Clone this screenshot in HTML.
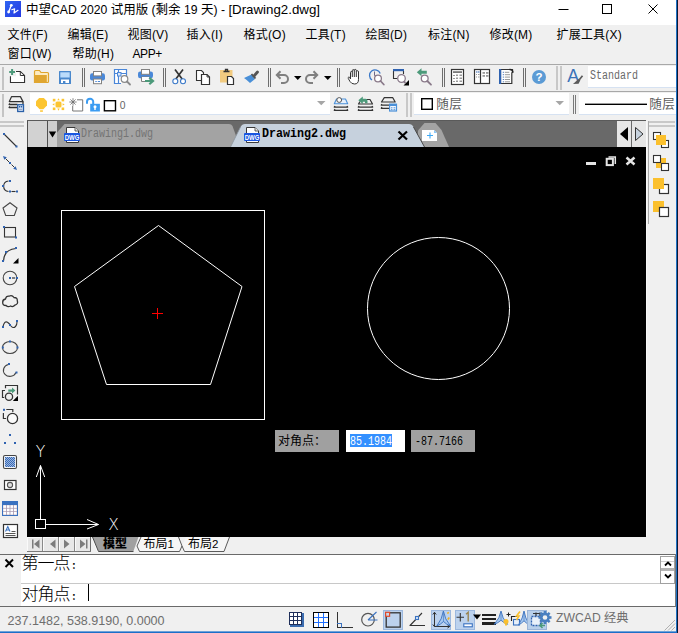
<!DOCTYPE html>
<html lang="zh-CN">
<head>
<meta charset="utf-8">
<title>中望CAD 2020</title>
<style>
html,body{margin:0;padding:0;}
body{width:678px;height:633px;position:relative;overflow:hidden;background:#f0f0f0;
 font-family:"Liberation Sans","Noto Sans CJK SC",sans-serif;font-size:12px;color:#000;}
.abs{position:absolute;}
#title{left:0;top:0;width:678px;height:25px;background:#fff;}
#title .t{left:26px;top:1px;font-size:12.5px;line-height:17px;white-space:nowrap;}
#title .t i{font-style:normal;font-size:12.2px;}
#title .t b{font-weight:normal;font-size:13.3px;}
#menu{left:0;top:25px;padding-left:0;width:678px;height:40px;background:#f0f0f0;}
#menu span{position:absolute;margin-left:-0.5px;letter-spacing:.2px;white-space:nowrap;font-size:12px;line-height:16px;}
.r1{top:2px;}
.r2{top:21px;}
#tb1{left:0;top:65px;width:678px;height:27px;background:#f0f0f0;}
#tb2{left:0;top:92px;width:678px;height:27px;background:#f0f0f0;}
.vsep{position:absolute;width:1px;background:#8c8c8c;}
.white{position:absolute;background:#fff;}
#tabbar{left:27px;top:120px;width:619px;height:27px;background:#696969;}
#canvas{left:27px;top:147px;width:619px;height:390px;background:#000;}
#ltb{left:0;top:119px;width:27px;height:434px;background:#f0f0f0;}
#rtb{left:646px;top:119px;width:30px;height:434px;background:#f0f0f0;}
#layout{left:27px;top:537px;width:619px;height:16px;background:#f0f0f0;}
#cmd{left:0;top:553px;width:676px;height:53px;background:#fff;}
#status{left:0;top:607px;width:676px;height:26px;background:#f0f0f0;}
#redge1{left:676px;top:0;width:1px;height:633px;background:#1f6fc4;}
#redge2{left:677px;top:0;width:1px;height:633px;background:#0b1a33;}
.mono{font-family:"Liberation Mono","Noto Sans CJK SC",monospace;}
.sim{font-family:"Liberation Mono","Noto Sans CJK SC",monospace;font-size:12px;line-height:14px;white-space:nowrap;display:inline-block;transform:scaleX(.8333);transform-origin:0 0;}
.simb{font-family:"Liberation Mono","Noto Sans CJK SC",monospace;font-weight:bold;font-size:12px;line-height:14px;white-space:nowrap;display:inline-block;transform:scaleX(.972);transform-origin:0 0;}
</style>
</head>
<body>

<!-- TITLE BAR -->
<div id="title" class="abs">
  <svg class="abs" style="left:5px;top:1px" width="16" height="16" viewBox="0 0 16 16">
    <defs><linearGradient id="zg" x1="0" y1="0" x2="1" y2="1"><stop offset="0" stop-color="#2f66f2"/><stop offset="1" stop-color="#2438e2"/></linearGradient></defs>
    <rect width="16" height="16" fill="url(#zg)"/>
    <path d="M6.300 4.300 L3.600 11" fill="none" stroke="#fff" stroke-width="1.300" stroke-linecap="round"/>
    <path d="M6.800 8.700 L9.600 7.800 L9 12 L13 9.300" fill="none" stroke="#fff" stroke-width="1.200" stroke-linejoin="round" stroke-linecap="round"/>
    <circle cx="6.300" cy="4.300" r="1.400" fill="#fff"/><circle cx="3.600" cy="11" r="1.400" fill="#fff"/>
  </svg>
  <div class="abs t">中望<i>CAD 2020 </i>试用版<i> (</i>剩余<i> 19 </i>天<i>) - </i><b>[Drawing2.dwg]</b></div>
  <svg class="abs" style="left:550px;top:0" width="126" height="25" viewBox="0 0 126 25">
    <path d="M8.5 9.5 H18.5" stroke="#000" stroke-width="1" fill="none"/>
    <rect x="52.5" y="4.5" width="9" height="9" stroke="#000" stroke-width="1" fill="none"/>
    <path d="M98.5 4.5 L107.5 13.5 M107.5 4.5 L98.5 13.5" stroke="#000" stroke-width="1" fill="none"/>
  </svg>
</div>

<!-- MENU BAR -->
<div id="menu" class="abs">
  <span class="r1" style="left:8px">文件(F)</span>
  <span class="r1" style="left:68px">编辑(E)</span>
  <span class="r1" style="left:128px">视图(V)</span>
  <span class="r1" style="left:187px">插入(I)</span>
  <span class="r1" style="left:244px">格式(O)</span>
  <span class="r1" style="left:306px">工具(T)</span>
  <span class="r1" style="left:366px">绘图(D)</span>
  <span class="r1" style="left:428.500px">标注(N)</span>
  <span class="r1" style="left:490px">修改(M)</span>
  <span class="r1" style="left:557px">扩展工具(X)</span>
  <span class="r2" style="left:8px">窗口(W)</span>
  <span class="r2" style="left:73px">帮助(H)</span>
  <span class="r2" style="left:133px;letter-spacing:-0.4px">APP+</span>
</div>

<!-- TOOLBAR ROW 1 -->
<div id="tb1" class="abs">
<svg class="abs" style="left:0;top:0" width="678" height="27" viewBox="0 65 678 27">
  <g shape-rendering="crispEdges">
    <rect x="2" y="67" width="2" height="23" fill="#c4c4c4"/>
    <rect x="82" y="68" width="1" height="19" fill="#6e6e6e"/><rect x="84" y="68" width="1" height="19" fill="#6e6e6e"/>
    <rect x="163" y="68" width="1" height="19" fill="#6e6e6e"/><rect x="165" y="68" width="1" height="19" fill="#6e6e6e"/>
    <rect x="268" y="68" width="1" height="19" fill="#6e6e6e"/><rect x="270" y="68" width="1" height="19" fill="#6e6e6e"/>
    <rect x="337" y="68" width="1" height="19" fill="#6e6e6e"/><rect x="339" y="68" width="1" height="19" fill="#6e6e6e"/>
    <rect x="442" y="68" width="1" height="19" fill="#6e6e6e"/><rect x="444" y="68" width="1" height="19" fill="#6e6e6e"/>
    <rect x="523" y="68" width="1" height="19" fill="#6e6e6e"/><rect x="525" y="68" width="1" height="19" fill="#6e6e6e"/>
    <rect x="556" y="66" width="2" height="24" fill="#c8c8c8"/><rect x="560" y="66" width="2" height="24" fill="#c8c8c8"/>
    <rect x="588" y="66" width="88" height="21" fill="#fff"/>
    <rect x="588" y="87" width="88" height="1" fill="#d6e2f2"/>
  </g>
  <!-- new -->
  <path d="M10.500 76.300 V82.500 H24.500 V75.500 L20.300 71.500 H16" fill="none" stroke="#333" stroke-width="1.200"/>
  <path d="M11.100 76.300 V81.900 H23.900 V75.800 L20 72.100 H16 V76.300 Z" fill="#fff"/>
  <path d="M20.300 71.500 V75.500 H24.500" fill="none" stroke="#333" stroke-width="1"/>
  <path d="M9.200 72 H15 M12.100 69.100 V74.900" stroke="#4c9a7a" stroke-width="2" fill="none"/>
  <!-- open -->
  <path d="M34.500 82.500 V71.500 Q34.500 70.500 35.500 70.500 H39.500 L41 72.500 H47.500 Q48.500 72.500 48.500 73.500 V81.500 Q48.500 82.500 47.500 82.500 Z" fill="#fdebc0" stroke="#dfa52c" stroke-width="1.200"/>
  <rect x="34" y="75" width="12.800" height="8" fill="#e0a630"/>
  <!-- save -->
  <rect x="59" y="71" width="12" height="13" rx="0.500" fill="#4a88cc"/>
  <rect x="60.300" y="72.300" width="9.400" height="5.200" fill="#bbdcfb"/>
  <rect x="61" y="79.500" width="8" height="3.500" fill="#fff"/>
  <rect x="63" y="81" width="2.400" height="3" fill="#4a88cc"/>
  <!-- print -->
  <rect x="90" y="73.300" width="15" height="7.200" rx="2.200" fill="#4a88d8"/>
  <rect x="93.500" y="71.500" width="8" height="4.400" fill="#fff" stroke="#828282" stroke-width="1"/>
  <rect x="93.500" y="79" width="8" height="4.700" fill="#fff" stroke="#828282" stroke-width="1"/>
  <path d="M95.300 81.500 H96.800 M97.800 81.500 H100" stroke="#4a88d8" stroke-width="1.200"/>
  <!-- preview -->
  <path d="M126.500 76 V69.500 H114.500 V83.500 H121" fill="#fff" stroke="#4a86d8" stroke-width="1.2"/>
  <path d="M118.500 69.500 V83.500 M114.500 73.500 H126.500" stroke="#4a86d8" stroke-width="1.2" fill="none"/>
  <rect x="117.5" y="72.500" width="3.500" height="3.500" fill="#d6e6fa" stroke="#4a86d8" stroke-width="1"/>
  <circle cx="124.5" cy="79" r="3.300" fill="#fff" stroke="#8a8a8a" stroke-width="1.2"/>
  <path d="M127 81.500 L130 84.500" stroke="#8a8a8a" stroke-width="1.800" stroke-linecap="round"/>
  <!-- plot -->
  <rect x="138" y="71.400" width="15" height="6.800" rx="2.200" fill="#4a88d8"/>
  <rect x="141.500" y="69.500" width="8" height="4.800" fill="#fff" stroke="#828282" stroke-width="1"/>
  <path d="M149.500 77 H141.500 V81.500 H146" fill="#fff" stroke="#828282" stroke-width="1"/>
  <rect x="142" y="77" width="7" height="3" fill="#fff"/>
  <path d="M145 81 H152 M149.300 77.800 L153 81 L149.300 84.300" stroke="#4c9a7a" stroke-width="2.200" fill="none"/>
  <!-- cut -->
  <path d="M175 69.500 L182.500 79.500 M183 69.500 L175.500 79.500" stroke="#333" stroke-width="1.700" fill="none"/>
  <circle cx="175.3" cy="81.300" r="2.500" fill="#fff" stroke="#3a78c8" stroke-width="1.100"/>
  <circle cx="183" cy="81.300" r="2.500" fill="#fff" stroke="#3a78c8" stroke-width="1.100"/>
  <!-- copy -->
  <path d="M196.500 70.500 H201.500 L203.500 72.500 V80.500 H196.500 Z" fill="#fff" stroke="#333" stroke-width="1.100"/>
  <path d="M201.500 74.500 H207 L209.500 77 V84.500 H201.500 Z" fill="#fff" stroke="#333" stroke-width="1.200"/>
  <path d="M207 74.500 V77 H209.500" fill="none" stroke="#333" stroke-width="0.900"/>
  <!-- paste -->
  <rect x="220" y="70" width="12.500" height="12.500" fill="#f2cb80"/>
  <path d="M223.500 71.500 H229.500 M225.500 71 V69.500 H227.500 V71" stroke="#333" stroke-width="1.300" fill="none"/>
  <path d="M227.500 76.500 H231.500 L233.500 78.500 V84.500 H227.500 Z" fill="#fff" stroke="#333" stroke-width="1.200"/>
  <!-- matchprop brush -->
  <path d="M244 78 L251.500 74.500 L255 79 L250 83 Q247 80 244 78 Z" fill="#4a90d8"/>
  <path d="M251.500 74 L255.500 78.500" stroke="#555" stroke-width="1.800"/>
  <path d="M254 76 L257.500 72" stroke="#555" stroke-width="2.800" stroke-linecap="round"/>
  <!-- undo -->
  <path d="M277.500 75 H284 A4 4 0 0 1 284 83 H281" fill="none" stroke="#808080" stroke-width="2"/>
  <path d="M280.500 71.300 L276.800 75 L280.500 78.700" fill="none" stroke="#808080" stroke-width="2"/>
  <path d="M294 76 H301.500 L297.750 80 Z" fill="#000"/>
  <!-- redo -->
  <path d="M316.500 75 H310 A4 4 0 0 0 310 83 H313" fill="none" stroke="#808080" stroke-width="2"/>
  <path d="M313.500 71.300 L317.200 75 L313.500 78.700" fill="none" stroke="#808080" stroke-width="2"/>
  <path d="M324 76 H331.500 L327.750 80 Z" fill="#000"/>
  <!-- pan hand -->
  <path d="M350.500 79 V72.500 Q350.500 71.500 351.400 71.500 Q352.300 71.500 352.300 72.500 V70.700 Q352.300 69.600 353.300 69.600 Q354.300 69.600 354.300 70.700 V70.300 Q354.300 69.400 355.300 69.400 Q356.300 69.400 356.300 70.700 V71.500 Q356.300 70.700 357.300 70.700 Q358.500 70.700 358.500 72 V79.500 Q358.500 84 354.500 84 Q351.500 84 350 81.500 L348.300 78.500 Q347.800 77.300 348.800 77 Q349.800 76.800 350.500 79 Z" fill="#fff" stroke="#333" stroke-width="1"/>
  <path d="M352.300 72.500 V77 M354.300 70.700 V77 M356.300 71.500 V77" stroke="#333" stroke-width="1" fill="none"/>
  <!-- zoom realtime -->
  <path d="M372 80 A5.500 5.500 0 1 1 380.200 73.500" fill="none" stroke="#3a78c8" stroke-width="1.300"/>
  <path d="M374.500 71.500 V75.500 H377" fill="none" stroke="#6a6a8a" stroke-width="1"/>
  <circle cx="378" cy="78.500" r="3.400" fill="#fff" stroke="#8a7a8a" stroke-width="1.300"/>
  <path d="M380.500 81 L383.800 84.500" stroke="#8a7a8a" stroke-width="1.800" stroke-linecap="round"/>
  <!-- zoom window -->
  <path d="M393.500 71 V78.500 H397 M403.500 71 V74" fill="none" stroke="#333" stroke-width="1.100"/>
  <rect x="393" y="69" width="11" height="2.200" fill="#2f62b0"/>
  <circle cx="401.5" cy="78.500" r="3.800" fill="#fff" stroke="#8a7a8a" stroke-width="1.300"/>
  <path d="M404 81.500 L405.500 83" stroke="#8a7a8a" stroke-width="1.800"/>
  <path d="M409 80 V85.500 H403.500 Z" fill="#000"/>
  <!-- zoom previous -->
  <path d="M416.800 72.300 L421.500 68.300 V70.800 H426.800 V73.800 H421.500 V76.300 Z" fill="#4c9a7a"/>
  <circle cx="424.700" cy="78.500" r="3.400" fill="#fff" stroke="#8a7a8a" stroke-width="1.300"/>
  <path d="M427.300 81 L431 84.700" stroke="#8a7a8a" stroke-width="1.800" stroke-linecap="round"/>
  <!-- calculator -->
  <rect x="451.500" y="69.500" width="12" height="15" fill="#fff" stroke="#333" stroke-width="1.200"/>
  <rect x="453" y="71.200" width="9" height="1.800" fill="#7a7a7a"/>
  <g fill="#9a9a9a"><rect x="453" y="75" width="2" height="1"/><rect x="456" y="74.500" width="2" height="1.500"/><rect x="459.500" y="74.500" width="2.500" height="1.500"/>
  <rect x="453" y="78" width="2" height="1"/><rect x="456" y="77.500" width="2" height="1.500"/><rect x="459.500" y="77.500" width="2.500" height="1.500"/>
  <rect x="453" y="81" width="2" height="1"/><rect x="456" y="80.500" width="2" height="1.500"/><rect x="459.500" y="80.500" width="2.500" height="1.500"/></g>
  <!-- design center -->
  <rect x="474.500" y="69.500" width="15" height="14" fill="#fff" stroke="#333" stroke-width="1.200"/>
  <path d="M480.500 69.500 V83.500" stroke="#333" stroke-width="1.200"/>
  <g fill="#2f62b0"><rect x="476" y="71.500" width="1" height="1"/><rect x="477.500" y="71.500" width="2" height="1"/></g>
  <g fill="#9a9a9a"><rect x="476" y="74" width="1" height="1"/><rect x="478" y="74" width="1.500" height="1"/><rect x="476" y="76.500" width="1" height="1"/><rect x="478" y="76.500" width="1.500" height="1"/>
  <rect x="482.500" y="72" width="2.500" height="1.800"/><rect x="486" y="72" width="2.500" height="1.800"/><rect x="482.500" y="75" width="2.500" height="1.800"/><rect x="486" y="75" width="2.500" height="1.800"/></g>
  <!-- properties -->
  <path d="M500.500 69.500 H512.500 V72 Q511.800 72.500 511.800 73.500 V83.500 H500.500 Z" fill="#fff" stroke="#333" stroke-width="1.200"/>
  <rect x="499" y="69" width="2.200" height="15" fill="#2f62b0"/>
  <path d="M509.500 69.500 Q513 69.300 512.800 72.800" fill="none" stroke="#222" stroke-width="1.600"/>
  <g fill="#2f62b0"><rect x="502.800" y="71.800" width="1" height="1"/><rect x="502.800" y="74.200" width="1" height="1"/><rect x="502.800" y="76.600" width="1" height="1"/><rect x="502.800" y="79" width="1" height="1"/><rect x="502.800" y="81.300" width="1" height="1"/></g>
  <g fill="#9a9a9a"><rect x="504.800" y="71.800" width="4.500" height="1"/><rect x="504.800" y="74.200" width="5.200" height="1"/><rect x="504.800" y="76.600" width="5.200" height="1"/><rect x="504.800" y="79" width="5.200" height="1"/><rect x="504.800" y="81.300" width="5.200" height="1"/></g>
  <!-- help -->
  <circle cx="539" cy="77" r="7" fill="#5b9bd5"/>
  <text x="539" y="81.300" text-anchor="middle" font-family="Liberation Sans, sans-serif" font-weight="bold" font-size="11.500" fill="#fff">?</text>
  <!-- text style -->
  <text x="567.200" y="82" font-family="Liberation Sans, sans-serif" font-size="17.800" fill="#3a72b8">A</text>
  <path d="M573 84 L578.800 78.800 L580.300 80.300 L578.600 83.800 Z" fill="#5a5a5a"/><path d="M579.300 79.700 L582.500 75.700" stroke="#5a5a5a" stroke-width="1.700"/>
</svg>
<span class="abs sim" style="left:590px;top:3.600px;color:#6a6a6a">Standard</span>
</div>

<!-- TOOLBAR ROW 2 -->
<div id="tb2" class="abs">
<svg class="abs" style="left:0;top:0" width="678" height="27" viewBox="0 92 678 27">
  <g shape-rendering="crispEdges">
    <rect x="2" y="94" width="2" height="23" fill="#c4c4c4"/>
    <rect x="30" y="93" width="300" height="21" fill="#fff"/>
    <rect x="30" y="114" width="300" height="1" fill="#d6e2f2"/>
    <rect x="406" y="93" width="2" height="24" fill="#c8c8c8"/><rect x="410" y="93" width="2" height="24" fill="#c8c8c8"/>
    <rect x="414" y="93" width="155" height="21" fill="#fff"/>
    <rect x="414" y="114" width="155" height="1" fill="#d6e2f2"/>
    <rect x="573" y="95" width="1" height="19" fill="#7a7a7a"/><rect x="575" y="95" width="1" height="19" fill="#7a7a7a"/>
    <rect x="579" y="93" width="97" height="21" fill="#fff"/>
    <rect x="579" y="114" width="97" height="1" fill="#d6e2f2"/>
    <rect x="585" y="104" width="62" height="1" fill="#000"/><rect x="585" y="103" width="62" height="1" fill="#9a9a9a"/>
  </g>
  <!-- layer manager -->
  <path d="M9.300 101.600 L11.600 96.600 H20.400 L23 101.600 Z" fill="none" stroke="#333" stroke-width="1.200" stroke-linejoin="round"/>
  <path d="M9.800 103.400 L9.100 104.500 H17.500 M9.800 106.400 L9.100 107.500 H17.500 M23 101.600 V104" stroke="#333" stroke-width="1.300" fill="none" stroke-linejoin="round"/>
  <rect x="17.700" y="104.700" width="5.800" height="6.800" fill="#dbe6f6" stroke="#2a60a8" stroke-width="1.300"/>
  <rect x="19" y="106" width="1.300" height="1.500" fill="#2a60a8"/><rect x="20.900" y="106" width="1.300" height="1.500" fill="#2a60a8"/><rect x="19" y="108.800" width="3.200" height="1" fill="#8a9ab8"/>
  <!-- bulb -->
  <path d="M39.200 98 H43.800 L47 101.200 V105.600 L43.300 109.300 H39.700 L36 105.600 V101.200 Z" fill="#fcc531"/>
  <rect x="40.100" y="110.300" width="2.800" height="1.500" fill="#fcc531"/>
  <!-- sun -->
  <rect x="55.500" y="101.400" width="6" height="6" rx="1.500" fill="#fcc531"/>
  <g fill="#fcc531"><rect x="52.800" y="98.800" width="2.600" height="2.600"/><rect x="61.600" y="98.800" width="2.600" height="2.600"/><rect x="52.800" y="107.500" width="2.600" height="2.600"/><rect x="61.600" y="107.500" width="2.600" height="2.600"/>
  <path d="M57.300 100.300 L58.500 98.200 L59.700 100.300 Z M57.300 108.600 L58.500 110.700 L59.700 108.600 Z M54.400 103.200 L52.300 104.400 L54.400 105.600 Z M62.600 103.200 L64.700 104.400 L62.600 105.600 Z"/></g>
  <!-- vp freeze -->
  <path d="M77 99.800 H82.700 V111 H72.700 V106" fill="#fff" stroke="#777" stroke-width="1"/>
  <path d="M69.300 102 H76.700 M73 98.200 V105.800 M70.400 99.400 L75.600 104.600 M75.600 99.400 L70.400 104.600" stroke="#6a6a6a" stroke-width="0.800" fill="none"/>
  <!-- lock -->
  <path d="M87 103.800 V101.800 A3.100 3.100 0 0 1 93.200 101.800 V104.500" fill="none" stroke="#3b9cf2" stroke-width="2"/>
  <rect x="90.200" y="103.800" width="9.700" height="7.700" fill="#3b9cf2"/>
  <circle cx="95" cy="106.700" r="1.500" fill="#fff"/><rect x="94.300" y="106.700" width="1.400" height="3.300" fill="#fff"/>
  <!-- color -->
  <rect x="104.400" y="100.700" width="11.100" height="10.100" fill="#fff" stroke="#000" stroke-width="1.400"/>
  <path d="M317 101 H325.500 L321.250 105.300 Z" fill="#a6a6a6"/>
  <!-- layer make current -->
  <path d="M334.300 103.800 L336.500 99 H345.500 L347.700 103.800 Z" fill="#e6f0fc" stroke="#4a90d8" stroke-width="1.100" stroke-linejoin="round"/>
  <path d="M335 106 L334.300 107.100 H347.700 L347 106 M335 109.200 L334.300 110.300 H347.700 L347 109.200" stroke="#333" stroke-width="1.300" fill="none" stroke-linejoin="round"/>
  <circle cx="339.200" cy="100" r="2.400" fill="#fff" stroke="#555" stroke-width="1"/>
  <!-- layer previous -->
  <path d="M366 99.500 H370 L372.500 104 H358.500 L360 101.500" fill="none" stroke="#333" stroke-width="1.200" stroke-linejoin="round"/>
  <path d="M359 106 L358.300 107.100 H372.700 L372 106 M359 109.200 L358.300 110.300 H372.700 L372 109.200" stroke="#333" stroke-width="1.300" fill="none" stroke-linejoin="round"/>
  <path d="M358.300 100.300 L362.800 96.500 V98.800 H365.500 Q367.500 98.800 367.500 101 V103.300 H365 V101.800 H362.800 V104 Z" fill="#4c9a7a"/>
  <!-- layer states -->
  <path d="M381.500 102 L384.300 97.700 H392.800 L395.200 102 Z" fill="none" stroke="#333" stroke-width="1.200" stroke-linejoin="round"/>
  <path d="M382 104.100 L381.300 105.200 H389 M382 107.200 L381.300 108.300 H389" stroke="#333" stroke-width="1.300" fill="none" stroke-linejoin="round"/>
  <rect x="389.600" y="104.300" width="6.900" height="6.700" fill="#f4f8fe" stroke="#4a90d8" stroke-width="1.200"/>
  <rect x="389" y="103.800" width="8" height="2.200" fill="#4a90d8"/>
  <g fill="#4a90d8"><rect x="391" y="107.300" width="1.500" height="1"/><rect x="393.500" y="107.300" width="1.800" height="1"/><rect x="391" y="109.200" width="1.500" height="1"/><rect x="393.500" y="109.200" width="1.800" height="1"/></g>
  <!-- color bylayer -->
  <rect x="421.700" y="98.700" width="10.600" height="10.600" fill="#fff" stroke="#000" stroke-width="1.400"/>
  <path d="M555.500 101 H564 L559.750 105.300 Z" fill="#a6a6a6"/>
</svg>
<span class="abs" style="left:119.800px;top:7px;font-size:10.300px;line-height:14px;color:#666;font-family:'Liberation Sans',sans-serif">0</span>
<span class="abs" style="left:436.200px;top:4.200px;font-size:12.600px;line-height:16px;color:#5c5c5c;white-space:nowrap;letter-spacing:.5px">随层</span>
<span class="abs" style="left:649.200px;top:4.200px;font-size:12.600px;line-height:16px;color:#5c5c5c;white-space:nowrap;letter-spacing:.5px">随层</span>
</div>

<div class="abs" style="left:0;top:64px;width:676px;height:1px;background:#a8a8a8"></div>
<div class="abs" style="left:0;top:91px;width:676px;height:1px;background:#a8a8a8"></div>
<div class="abs" style="left:0;top:118px;width:676px;height:2px;background:#f0f0f0"></div>
<!-- LEFT TOOLBAR -->
<div id="ltb" class="abs">
<svg class="abs" style="left:0;top:0" width="27" height="434" viewBox="0 119 27 434">
  <g shape-rendering="crispEdges">
    <rect x="0" y="121" width="24" height="2" fill="#c8c8c8"/>
    <rect x="0" y="125" width="24" height="2" fill="#c8c8c8"/>
  </g>
  <!-- 1 line -->
  <path d="M4 134 L16.500 146.500" stroke="#333" stroke-width="1.100"/>
  <rect x="3" y="133" width="2" height="2" fill="#2f62b0"/><rect x="15.5" y="145.5" width="2" height="2" fill="#2f62b0"/>
  <!-- 2 xline -->
  <path d="M5.500 158.500 L9 162 M11.500 164.500 L14.500 167.500" stroke="#333" stroke-width="1"/>
  <path d="M3 156 L6.800 157.300 L4.300 159.800 Z M17 170 L13.200 168.700 L15.700 166.200 Z" fill="#2f62b0"/>
  <rect x="9" y="162" width="2" height="2" fill="#2f62b0"/>
  <!-- 3 pline -->
  <path d="M8.500 181 A5.600 5.300 0 0 0 8.500 191.500" stroke="#333" stroke-width="1.100" fill="none"/>
  <path d="M11.500 191.500 H15.500" stroke="#333" stroke-width="1.100" fill="none"/>
  <rect x="9" y="180" width="2" height="2" fill="#2f62b0"/><rect x="2" y="185" width="2" height="2" fill="#2f62b0"/><rect x="9" y="190.5" width="2" height="2" fill="#2f62b0"/><rect x="16" y="190.5" width="2" height="2" fill="#2f62b0"/>
  <!-- 4 polygon -->
  <path d="M10 202.700 L17 208 L14.300 215.500 H5.700 L3 208 Z" stroke="#444" stroke-width="1.100" fill="none"/>
  <!-- 5 rectangle -->
  <rect x="4.500" y="227.500" width="11" height="9.500" stroke="#333" stroke-width="1.100" fill="none"/>
  <rect x="3" y="226" width="2" height="2" fill="#2f62b0"/><rect x="15" y="236.5" width="2" height="2" fill="#2f62b0"/>
  <!-- 6 arc -->
  <path d="M3.500 261 Q4 249.500 16 248.500" stroke="#333" stroke-width="1.200" fill="none"/>
  <rect x="2" y="260" width="2" height="2" fill="#2f62b0"/><rect x="5" y="251" width="2" height="2" fill="#2f62b0"/><rect x="15" y="247" width="2" height="2" fill="#2f62b0"/>
  <path d="M18.500 258 V263.500 H13 Z" fill="#000"/>
  <!-- 7 circle -->
  <circle cx="10" cy="278" r="6.800" stroke="#444" stroke-width="1.100" fill="none"/>
  <path d="M12 278 H15.200" stroke="#333" stroke-width="1.200"/>
  <rect x="9" y="277" width="2" height="2" fill="#2f62b0"/><rect x="16" y="277" width="2" height="2" fill="#2f62b0"/>
  <!-- 8 revcloud -->
  <path d="M6 305.500 Q2.500 305.500 2.700 302.500 Q2.500 299.500 5.500 299 Q6 296 9 296.200 Q12 294.500 14 297.500 Q17.500 297.500 17.300 300.800 Q18.500 304 15 305 Q13 307.500 10.500 306 Q8 307.500 6 305.500 Z" stroke="#333" stroke-width="1.300" fill="none"/>
  <!-- 9 spline -->
  <path d="M3 326.500 Q4.500 320.500 7.500 322.200 Q9.500 323.500 10.500 325.500 Q13 329 15.500 326.500 Q17 325 17 322" stroke="#333" stroke-width="1.100" fill="none"/>
  <rect x="2" y="326" width="2" height="2" fill="#2f62b0"/><rect x="9" y="324" width="2" height="2" fill="#2f62b0"/><rect x="16" y="320" width="2" height="2" fill="#2f62b0"/>
  <!-- 10 ellipse -->
  <ellipse cx="10" cy="347.500" rx="7.500" ry="6" stroke="#444" stroke-width="1.100" fill="none"/>
  <rect x="9" y="340.5" width="2" height="2" fill="#2f62b0"/><rect x="1.8" y="346.5" width="2" height="2" fill="#2f62b0"/><rect x="16.5" y="346.5" width="2" height="2" fill="#2f62b0"/>
  <!-- 11 ellipse arc -->
  <path d="M8.500 364.500 A6.500 6 0 1 0 16 372.500" stroke="#444" stroke-width="1.100" fill="none"/>
  <rect x="8" y="363" width="2" height="2" fill="#2f62b0"/><rect x="15.5" y="371.5" width="2" height="2" fill="#2f62b0"/>
  <!-- 12 insert -->
  <path d="M5.500 388.200 V385.500 H17.500 V394.500 M5 390.500 H2.500 V397.500 H4.200" stroke="#333" stroke-width="1.200" fill="none"/>
  <circle cx="9" cy="396.800" r="3.600" stroke="#333" stroke-width="1.300" fill="#f0f0f0"/>
  <path d="M8.300 389.400 H12 V387.600 L15.400 390.600 L12 393.600 V391.800 H8.300 Z" fill="#4c9a7a"/>
  <path d="M18 395.800 V401 H12.800 Z" fill="#000"/>
  <!-- 13 block -->
  <path d="M6.300 409.500 H12.800 V412 M3.400 413 V418.500 H6" stroke="#333" stroke-width="1.200" fill="none"/>
  <rect x="3" y="408.8" width="2" height="2" fill="#2f62b0"/>
  <circle cx="12.500" cy="418.500" r="5.100" stroke="#333" stroke-width="1.300" fill="#fafafa"/>
  <!-- 14 point -->
  <rect x="9" y="434" width="2" height="2" fill="#2f62b0"/><rect x="4" y="442" width="2" height="2" fill="#2f62b0"/><rect x="14" y="442" width="2" height="2" fill="#2f62b0"/>
  <!-- 15 hatch -->
  <rect x="3.500" y="455.500" width="13" height="13" rx="1.500" stroke="#444" stroke-width="1.100" fill="#f4f6fa"/>
  <defs><pattern id="chk" x="5" y="457" width="2" height="2" patternUnits="userSpaceOnUse"><rect width="2" height="2" fill="#9cb8e0"/><rect width="1" height="1" fill="#3a6ab8"/><rect x="1" y="1" width="1" height="1" fill="#3a6ab8"/></pattern></defs><rect x="5" y="457" width="10" height="10" fill="url(#chk)" shape-rendering="crispEdges"/>
  <!-- 16 region -->
  <rect x="4.500" y="480.500" width="11.500" height="9" stroke="#333" stroke-width="1.200" fill="#fff"/>
  <circle cx="10" cy="485" r="2.600" stroke="#555" stroke-width="1.100" fill="#e0e0e0"/>
  <!-- 17 table -->
  <rect x="2" y="501" width="16" height="15" fill="#3a72c0"/>
  <rect x="3" y="505" width="14" height="10" fill="#a898b0"/>
  <g fill="#fff"><rect x="3.2" y="505.2" width="2.800" height="2.700"/><rect x="6.8" y="505.2" width="2.800" height="2.700"/><rect x="10.4" y="505.2" width="2.800" height="2.700"/><rect x="14" y="505.2" width="2.800" height="2.700"/><rect x="3.2" y="508.6" width="2.800" height="2.700"/><rect x="6.8" y="508.6" width="2.800" height="2.700"/><rect x="10.4" y="508.6" width="2.800" height="2.700"/><rect x="14" y="508.6" width="2.800" height="2.700"/><rect x="3.2" y="512" width="2.800" height="2.700"/><rect x="6.8" y="512" width="2.800" height="2.700"/><rect x="10.4" y="512" width="2.800" height="2.700"/><rect x="14" y="512" width="2.800" height="2.700"/></g>
  <!-- 18 mtext -->
  <rect x="3.500" y="524.500" width="14" height="13" stroke="#333" stroke-width="1.200" fill="#fff"/>
  <path d="M5.500 531.500 L7.800 526.500 L10 531.500 M6.500 530 H9" stroke="#3a72c0" stroke-width="1.100" fill="none"/>
  <path d="M11.500 531.500 H15.500 M5.500 533.500 H15.500 M5.500 535.500 H15.500" stroke="#444" stroke-width="0.900" fill="none"/>
</svg>
</div>

<!-- RIGHT TOOLBAR -->
<div id="rtb" class="abs">
<svg class="abs" style="left:0;top:0" width="30" height="434" viewBox="646 119 30 434">
  <g shape-rendering="crispEdges">
    <rect x="648" y="121" width="1" height="103" fill="#a8a8a8"/><rect x="646" y="121" width="1" height="415" fill="#f8f8f8"/>
    <rect x="649" y="121" width="26" height="2" fill="#c8c8c8"/>
    <rect x="649" y="125" width="26" height="2" fill="#c8c8c8"/>
  </g>
  <!-- 1 bring front -->
  <rect x="653.5" y="132.5" width="7" height="7" fill="#fff" stroke="#333" stroke-width="1.100"/><rect x="661.5" y="140.5" width="7" height="7" fill="#fff" stroke="#333" stroke-width="1.100"/><rect x="656" y="135" width="10" height="10" fill="#fbc02d"/>
  <!-- 2 send back -->
  <rect x="656" y="158" width="10" height="10" fill="#fbc02d"/><rect x="653.5" y="155.5" width="7" height="7" fill="#fff" stroke="#333" stroke-width="1.100"/><rect x="661.5" y="163.5" width="7" height="7" fill="#fff" stroke="#333" stroke-width="1.100"/>
  <!-- 3 above -->
  <rect x="659.5" y="184.5" width="9" height="9" fill="#fff" stroke="#333" stroke-width="1.200"/><rect x="653" y="178" width="11" height="11" fill="#fbc02d"/>
  <!-- 4 under -->
  <rect x="653" y="201" width="11" height="11" fill="#fbc02d"/><rect x="659.5" y="207.5" width="9" height="9" fill="#fff" stroke="#333" stroke-width="1.200"/>
</svg>
</div>

<!-- DOC TAB BAR -->
<div id="tabbar" class="abs">
<svg class="abs" style="left:0;top:0" width="619" height="27" viewBox="27 120 619 27">
  <rect x="27" y="120" width="619" height="27" fill="#696969"/>
  <rect x="27" y="120" width="619" height="1" fill="#5a5a5a" shape-rendering="crispEdges"/>
  <g shape-rendering="crispEdges">
    <rect x="27" y="121" width="21" height="26" fill="#d2d2d2"/>
    <rect x="27" y="121" width="1" height="26" fill="#505050"/>
    <rect x="47" y="121" width="1" height="26" fill="#505050"/>
    <rect x="48" y="121" width="9" height="26" fill="#cecece"/>
  </g>
  <path d="M48.800 131.500 H56.200 L52.500 137.500 Z" fill="#000"/>
  <!-- inactive tab -->
  <path d="M57 147 V132.500 L64.500 124 H229 Q231.500 124 232.500 126 L240 147 Z" fill="#a3a3a3"/>
  <!-- new tab -->
  <path d="M418 147 L418 130.500 L424.500 123 H435.500 L441.500 130 L449 147 Z" fill="#a3a3a3"/>
  <!-- active tab -->
  <path d="M230.500 147 L240.500 127 Q242 124 245 124 H409 Q412 124 413.500 127 L424.500 147 Z" fill="#c6d1dd"/>
  <path d="M413.500 127 L424.500 147" stroke="#4a4a4a" stroke-width="1" fill="none"/>
  <path d="M230.500 147 L240.500 127" stroke="#8a949e" stroke-width="0.800" fill="none"/>
  <!-- dwg icons -->
  <g id="dwg1">
    <path d="M66.500 127.500 H75 L78.500 131 V142.500 H66.500 Z" fill="#fff" stroke="#3a3a3a" stroke-width="1"/>
    <path d="M75 127.500 V131 H78.500" fill="#e8e8e8" stroke="#3a3a3a" stroke-width="0.800"/>
    <rect x="64" y="133" width="16" height="8" rx="1" fill="#1a56e0"/>
    <text x="72" y="140.200" text-anchor="middle" font-family="Liberation Sans, sans-serif" font-weight="bold" font-size="7.400" fill="#fff" textLength="14.600" lengthAdjust="spacingAndGlyphs">DWG</text>
  </g>
  <g id="dwg2">
    <path d="M246.500 127.500 H255 L258.500 131 V142.500 H246.500 Z" fill="#fff" stroke="#3a3a3a" stroke-width="1"/>
    <path d="M255 127.500 V131 H258.500" fill="#e8e8e8" stroke="#3a3a3a" stroke-width="0.800"/>
    <rect x="244" y="133" width="16" height="8" rx="1" fill="#1a56e0"/>
    <text x="252" y="140.200" text-anchor="middle" font-family="Liberation Sans, sans-serif" font-weight="bold" font-size="7.400" fill="#fff" textLength="14.600" lengthAdjust="spacingAndGlyphs">DWG</text>
  </g>
  <!-- close x -->
  <path d="M398.500 131.500 L407 139.500 M407 131.500 L398.500 139.500" stroke="#000" stroke-width="2.200" fill="none"/>
  <!-- new tab icon -->
  <path d="M422 130 H434 L437 133 V141 H422 Z" fill="#fff"/>
  <path d="M434 130 L437 133 H434 Z" fill="#8cc8f8"/>
  <path d="M427 135.500 H433 M430 132.500 V138.500" stroke="#3fa9f5" stroke-width="1.100" fill="none"/>
  <!-- nav arrows -->
  <g shape-rendering="crispEdges">
    <rect x="617" y="121" width="29" height="26" fill="#e6e6e6"/>
    <rect x="631" y="121" width="1" height="26" fill="#6a6a6a"/>
  </g>
  <path d="M628 127 V141 L620 134 Z" fill="#000"/>
  <path d="M635.500 127.500 V140.500 L643 134 Z" fill="#c6d1dd" stroke="#333" stroke-width="1"/>
</svg>
<span class="abs sim" style="left:54.300px;top:7.200px;color:#747474">Drawing1.dwg</span>
<span class="abs simb" style="left:234.500px;top:7.200px;color:#000">Drawing2.dwg</span>
</div>

<!-- CANVAS -->
<div id="canvas" class="abs">
<svg class="abs" style="left:0;top:0" width="619" height="390" viewBox="27 147 619 390">
  <g fill="none" stroke="#fff" stroke-width="1">
    <rect x="61.500" y="210.500" width="203" height="209" shape-rendering="crispEdges"/>
    <path d="M158.500 225.500 L242 286.500 L210.500 384.500 H106.500 L74.500 286.500 Z"/>
    <circle cx="438.500" cy="308.500" r="71"/>
    <!-- UCS -->
    <rect x="35.500" y="519.500" width="10" height="9" shape-rendering="crispEdges"/>
    <path d="M40.500 519 V465.500 M36.300 477 L40.500 465.500 L44.700 477" />
    <path d="M46 524.500 H98.500 M87 519.500 L98.500 524.500 L87 529" />
  </g>
  <path d="M152 313.500 H163 M157.500 308 V319" stroke="#ff0000" stroke-width="1" fill="none" shape-rendering="crispEdges"/>
  <text x="40.500" y="456.500" text-anchor="middle" font-family="DejaVu Sans, sans-serif" font-weight="200" font-size="15.500" fill="#fff" textLength="9.500" lengthAdjust="spacingAndGlyphs">Y</text>
  <text x="113.500" y="530" text-anchor="middle" font-family="DejaVu Sans, sans-serif" font-weight="200" font-size="15.500" fill="#fff">X</text>
  <!-- MDI buttons -->
  <rect x="586" y="162" width="10" height="3" fill="#e4e4e4" shape-rendering="crispEdges"/>
  <g fill="none" stroke="#e4e4e4">
    <rect x="606.700" y="158.800" width="6.200" height="6.300" stroke-width="2"/>
    <path d="M608.500 157 H615.300 V164" stroke-width="1.500"/>
    <path d="M626.500 157.500 L634.500 164.500 M634.500 157.500 L626.500 164.500" stroke-width="2.500"/>
  </g>
  <!-- dynamic input -->
  <g shape-rendering="crispEdges">
    <rect x="275" y="430" width="64" height="22" fill="#a0a0a0"/>
    <rect x="346" y="430" width="59" height="22" fill="#fff"/>
    <rect x="350" y="434" width="42" height="13" fill="#3390ff"/>
    <rect x="411" y="430" width="64" height="22" fill="#a0a0a0"/>
  </g>
</svg>
<span class="abs" style="left:251px;top:285.500px;font-size:12px;line-height:16px;color:#000;white-space:nowrap;">对角点：</span>
<span class="abs sim" style="left:323px;top:288px;color:#fff">85.1984</span>
<span class="abs sim" style="left:388px;top:288px;color:#000">-87.7166</span>
</div>

<!-- LAYOUT TABS -->
<div id="layout" class="abs">
<svg class="abs" style="left:0;top:0" width="619" height="16" viewBox="27 537 619 16">
  <g shape-rendering="crispEdges">
    <rect x="27" y="537" width="64" height="15" fill="#e8e8e8"/>
    <rect x="27" y="537" width="64" height="1" fill="#fafafa"/>
    <rect x="27" y="537" width="1" height="15" fill="#fafafa"/>
    <rect x="42" y="537" width="1" height="15" fill="#8a8a8a"/><rect x="43" y="537" width="1" height="15" fill="#fafafa"/>
    <rect x="58" y="537" width="1" height="15" fill="#8a8a8a"/><rect x="59" y="537" width="1" height="15" fill="#fafafa"/>
    <rect x="74" y="537" width="1" height="15" fill="#8a8a8a"/><rect x="75" y="537" width="1" height="15" fill="#fafafa"/>
    <rect x="90" y="537" width="1" height="15" fill="#6a6a6a"/>
    <rect x="27" y="551" width="64" height="1" fill="#7a7a7a"/>
  </g>
  <g fill="#7c7c7c">
    <rect x="32" y="539.500" width="1.500" height="9"/><path d="M39.500 539.500 V548.500 L34 544 Z"/>
    <path d="M55.500 539.500 V548.500 L50 544 Z"/>
    <path d="M64 539.500 V548.500 L69.500 544 Z"/>
    <path d="M80 539.500 V548.500 L85.500 544 Z"/><rect x="86" y="539.500" width="1.500" height="9"/>
  </g>
  <!-- tabs -->
  <path d="M141 537 L137 546 L139.500 551 H179.500 L182 546 L178.500 537 Z" fill="#f6f6f6"/>
  <path d="M186 537 L182 546 L184.500 551 H224 L229.500 537 Z" fill="#f6f6f6"/>
  <path d="M141 537 L137 546 L139.500 551.500 H179.500 L182 546 L178.500 537 M182 546 L184.500 551.500 H224 L229.500 537" fill="none" stroke="#4a4a4a" stroke-width="0.900"/>
  <path d="M91 537 L97 551.500 L98.500 551.500 L92.500 537 Z" fill="#fafafa"/>
  <path d="M92.500 537 H138.500 L133.500 551 H98.500 Z" fill="#a0a0a0"/>
  <path d="M92.500 537 L98.500 551.500 H133.500" fill="none" stroke="#4a4a4a" stroke-width="1"/>
</svg>
<span class="abs" style="left:76px;top:-0.500px;font-size:12px;line-height:15px;font-weight:900;color:#000;white-space:nowrap">模型</span>
<span class="abs" style="left:116.500px;top:-0.500px;font-size:12px;line-height:15px;color:#000;white-space:nowrap">布局<span style="font-family:'Liberation Sans',sans-serif;font-size:11.500px">1</span></span>
<span class="abs" style="left:161px;top:-0.500px;font-size:12px;line-height:15px;color:#000;white-space:nowrap">布局<span style="font-family:'Liberation Sans',sans-serif;font-size:11.500px">2</span></span>
</div>

<!-- COMMAND LINE -->
<div id="cmd" class="abs">
<svg class="abs" style="left:0;top:0" width="676" height="54" viewBox="0 553 676 54">
  <g shape-rendering="crispEdges">
    <rect x="0" y="553" width="676" height="54" fill="#fff"/>
    <rect x="0" y="553" width="676" height="1" fill="#f0f0f0"/>
    <rect x="0" y="554" width="676" height="1" fill="#6a6a6a"/>
    <rect x="0" y="555" width="21" height="51" fill="#f0f0f0"/>
    <rect x="21" y="583" width="655" height="1" fill="#c8c8c8"/>
    <rect x="0" y="606" width="676" height="1" fill="#6a6a6a"/>
    <rect x="675" y="554" width="1" height="53" fill="#7a7a7a"/>
    <rect x="660" y="556" width="15" height="27" fill="#fff"/>
    <rect x="660" y="568" width="15" height="3" fill="#b4b4b4"/>
    <rect x="660" y="556" width="1" height="27" fill="#a0a0a0"/>
    <rect x="674" y="556" width="1" height="27" fill="#a0a0a0"/>
    <rect x="660" y="556" width="15" height="1" fill="#a0a0a0"/>
    <rect x="661" y="561" width="13" height="1" fill="#d0d0d0"/>
    <rect x="660" y="583" width="15" height="1" fill="#a0a0a0"/>
    <rect x="88" y="584" width="1" height="17" fill="#000"/>
  </g>
  <path d="M5.500 559.500 L13 567 M13 559.500 L5.500 567" stroke="#000" stroke-width="2" fill="none"/>
  <path d="M665 565.500 L668 562.500 L671 565.500" stroke="#000" stroke-width="1.800" fill="none"/>
  <path d="M665 574.500 L668 577.500 L671 574.500" stroke="#000" stroke-width="1.800" fill="none"/>
</svg>
<span class="abs" style="left:21.500px;top:-0.500px;font-size:17px;letter-spacing:-1px;line-height:22px;font-weight:300;color:#000;white-space:nowrap">第一点<span style="font-size:9.500px;letter-spacing:0;position:relative;left:2px;top:0.800px;font-weight:700">：</span></span>
<span class="abs" style="left:21.500px;top:30.500px;font-size:17px;letter-spacing:-1px;line-height:22px;font-weight:300;color:#000;white-space:nowrap">对角点<span style="font-size:9.500px;letter-spacing:0;position:relative;left:2px;top:0.800px;font-weight:700">：</span></span>
</div>

<!-- STATUS BAR -->
<div id="status" class="abs">
<span class="abs" style="left:7.600px;top:5.700px;font-size:12.550px;line-height:16px;color:#6e6e6e;white-space:nowrap;font-family:'Liberation Sans',sans-serif">237.1482, 538.9190, 0.0000</span>
<span class="abs" style="left:556px;top:3px;font-size:12.200px;line-height:16px;color:#6e6e6e;white-space:nowrap">ZWCAD 经典</span>
<svg class="abs" style="left:0;top:0" width="676" height="26" viewBox="0 607 676 26">
  <rect x="0" y="631.400" width="676" height="1.600" fill="#1c6fc8"/>
  <!-- snap -->
  <g shape-rendering="crispEdges">
    <rect x="289" y="612" width="13" height="13" fill="#1f2f5a"/>
    <rect x="290" y="625" width="14" height="2" fill="#3a6cb0"/><rect x="302" y="613" width="2" height="14" fill="#3a6cb0"/>
    <g fill="#fff"><rect x="290" y="613" width="3" height="3"/><rect x="294" y="613" width="3" height="3"/><rect x="298" y="613" width="3" height="3"/>
    <rect x="290" y="617" width="3" height="3"/><rect x="294" y="617" width="3" height="3"/><rect x="298" y="617" width="3" height="3"/>
    <rect x="290" y="621" width="3" height="3"/><rect x="294" y="621" width="3" height="3"/><rect x="298" y="621" width="3" height="3"/></g>
    <!-- grid -->
    <rect x="313" y="612" width="16" height="16" fill="#000"/>
    <rect x="314" y="613" width="14" height="14" fill="#1f6fff"/>
    <g fill="#fff"><rect x="314" y="613" width="4" height="4"/><rect x="319" y="613" width="4" height="4"/><rect x="324" y="613" width="4" height="4"/>
    <rect x="314" y="618" width="4" height="4"/><rect x="319" y="618" width="4" height="4"/><rect x="324" y="618" width="4" height="4"/>
    <rect x="314" y="623" width="4" height="4"/><rect x="319" y="623" width="4" height="4"/><rect x="324" y="623" width="4" height="4"/></g>
    <!-- ortho -->
    <rect x="337" y="612" width="1" height="16" fill="#333"/><rect x="337" y="627" width="16" height="1" fill="#333"/>
    <rect x="337" y="623" width="5" height="1" fill="#3a72c0"/><rect x="341" y="623" width="1" height="5" fill="#3a72c0"/>
  </g>
  <!-- polar -->
  <circle cx="368" cy="619.700" r="6.300" fill="none" stroke="#555" stroke-width="1.200"/>
  <path d="M368 620 H377.500 M368 620 L376.500 612" stroke="#3a72c0" stroke-width="1.100" fill="none"/>
  <!-- osnap (active) -->
  <rect x="383.500" y="610.500" width="19" height="19" fill="#bcd2ee" stroke="#9cb8de" stroke-width="1"/>
  <rect x="386.200" y="612.800" width="14" height="14.300" fill="none" stroke="#333" stroke-width="1.300"/>
  <rect x="385.600" y="612.300" width="4" height="4" fill="#c8d6ea" stroke="#e04a2a" stroke-width="1.200"/>
  <!-- otrack -->
  <path d="M409.500 625.500 H425 M410 625.500 L422 613" stroke="#333" stroke-width="1.100" fill="none"/>
  <rect x="415.500" y="616.500" width="3" height="3" fill="#d8e6f8" stroke="#3a72c0" stroke-width="1.100"/>
  <!-- dyn ucs (active) -->
  <rect x="431.500" y="610.500" width="19" height="19" fill="#bcd2ee" stroke="#9cb8de" stroke-width="1"/>
  <path d="M434.500 612.500 V626.500 H449.500 M432.800 614.500 L434.500 612.300 L436.200 614.500 M432.800 624.500 L434.500 626.700 M447.500 625 L449.700 626.500 L447.500 628" stroke="#333" stroke-width="1" fill="none"/>
  <path d="M443.400 611 Q444.500 619 450.500 626 Q446.500 624.500 443.500 621.500 Q440.500 624.500 436.800 626 Q442.300 619 443.400 611 Z" fill="#a8c8ee" stroke="#3a72c0" stroke-width="0.900" stroke-linejoin="round"/>
  <path d="M443.400 612 L443.500 621.500" stroke="#3a72c0" stroke-width="0.600"/>
  <path d="M447.300 613.500 L448.800 612.300 M447.800 619.500 L449.300 617.500" stroke="#f0b020" stroke-width="1.600" fill="none"/>
  <!-- dyn input (active) -->
  <rect x="455.500" y="610.500" width="19" height="19" fill="#bcd2ee" stroke="#9cb8de" stroke-width="1"/>
  <path d="M456.500 617.300 H464 M460.300 613 V621.500" stroke="#333" stroke-width="1.100" fill="none"/>
  <path d="M466 614.200 L468.200 612.300 V621.500" stroke="#9a8450" stroke-width="1.400" fill="none"/>
  <rect x="463.800" y="623.800" width="8.500" height="3" fill="#fff" stroke="#3a72c0" stroke-width="1.100"/>
  <path d="M473 614.500 H481 L477 619.500 Z" fill="#000"/>
  <!-- lineweight -->
  <g shape-rendering="crispEdges" fill="#222"><rect x="482" y="614" width="14" height="2"/><rect x="482" y="618" width="14" height="2"/><rect x="482" y="622" width="14" height="3"/></g>
  <!-- annotation scale -->
  <path d="M501 611 Q502 618 507.600 624.300 Q504 623 501 620.300 Q498 623 494.300 624.300 Q500 618 501 611 Z" fill="#a8c8ee" stroke="#3a72c0" stroke-width="0.900" stroke-linejoin="round"/><path d="M501 612 V620.300" stroke="#3a72c0" stroke-width="0.600"/>
  <circle cx="506" cy="621.500" r="2.500" fill="#fbc02d"/><rect x="505" y="624" width="2" height="1.500" fill="#fbc02d"/>
  <!-- plus squares -->
  <path d="M506.500 614.500 H510.500 M508.500 612.500 V616.500" stroke="#222" stroke-width="1" fill="none"/>
  <path d="M511.500 621 V616.500 H517" fill="none" stroke="#222" stroke-width="1.100"/>
  <rect x="513.500" y="619.500" width="6" height="5.500" fill="#e8f0fa" stroke="#3a72c0" stroke-width="1.100"/>
  <path d="M520 611.500 L516.500 616 H519 L516.500 620" stroke="#fbc02d" stroke-width="1.600" fill="none"/>
  <!-- annotation 2 -->
  <path d="M524 611 Q525 618 529.500 625 Q526.500 623.500 524 620.800 Q521.500 623.500 518.500 625 Q523 618 524 611 Z" fill="#a8c8ee" stroke="#3a72c0" stroke-width="0.900" stroke-linejoin="round"/><path d="M524 612 V620.800" stroke="#3a72c0" stroke-width="0.600"/>
  <!-- quick props (active) -->
  <rect x="527.500" y="610.500" width="19" height="19" fill="#b8cfea" stroke="#9ab4d8" stroke-width="1"/>
  <path d="M533 613.500 H543 M536 612.500 V616 M540 612.500 V616" stroke="#333" stroke-width="1.200" fill="none"/>
  <rect x="531.500" y="616.500" width="9" height="9" fill="#e8f0fa" stroke="#2f62b0" stroke-width="1.300" stroke-dasharray="2 1"/>
  <path d="M545 625.500 H540.500 M542.500 623 L540 625.500 L542.500 628" stroke="#4c9a7a" stroke-width="1.500" fill="none"/>
  <!-- gear -->
  <g transform="translate(545 617.500)">
    <g fill="#4a7fc0">
      <rect x="-1.300" y="-6.500" width="2.600" height="13"/>
      <rect x="-1.300" y="-6.500" width="2.600" height="13" transform="rotate(45)"/>
      <rect x="-1.300" y="-6.500" width="2.600" height="13" transform="rotate(90)"/>
      <rect x="-1.300" y="-6.500" width="2.600" height="13" transform="rotate(135)"/>
      <circle r="4.800"/>
    </g>
    <circle r="2.300" fill="#f0f0f0"/>
  </g>
  <!-- size grip -->
  <path d="M664.500 630.500 L675 620 M668 630.500 L675 623.500 M671.500 630.500 L675 627" stroke="#b0b0b0" stroke-width="1" fill="none"/>
</svg>
</div>

<div id="redge1" class="abs"></div>
<div id="redge2" class="abs"></div>
</body>
</html>
